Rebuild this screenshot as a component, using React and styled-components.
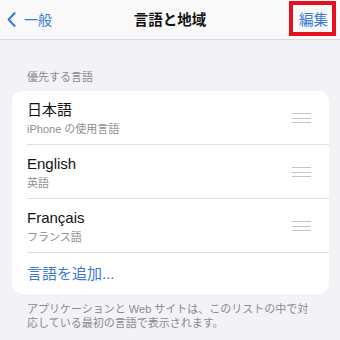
import React from 'react';
import styled, { createGlobalStyle } from 'styled-components';

const GlobalStyle = createGlobalStyle`
  body {
    margin: 0;
    background: #f2f2f7;
    font-family: "Liberation Sans", "Noto Sans CJK JP", sans-serif;
  }
`;

const Screen = styled.div`
  position: relative;
  width: 340px;
  height: 340px;
  overflow: hidden;
  background: #f2f2f7;
`;

const NavBar = styled.div`
  height: 39px;
  display: grid;
  grid-template-columns: 1fr auto 1fr;
  align-items: center;
  background: #f9f9fa;
  border-bottom: 1px solid #d9d9dd;
`;

const BackButton = styled.div`
  display: flex;
  align-items: center;
  gap: 8px;
  padding-left: 7px;
  color: #3a78d6;
  font-size: 14px;
  line-height: 20px;
`;

const Title = styled.div`
  font-size: 14.5px;
  font-weight: bold;
  color: #111;
  line-height: 20px;
`;

const EditButton = styled.div`
  justify-self: end;
  padding-right: 12px;
  color: #3a78d6;
  font-size: 14.5px;
  line-height: 20px;
`;

const Highlight = styled.div`
  position: absolute;
  left: 289px;
  top: 1px;
  width: 47px;
  height: 35px;
  box-sizing: border-box;
  border: 4px solid #e3121d;
`;

const SectionHeader = styled.div`
  padding: 30px 0 7px 27px;
  font-size: 11px;
  line-height: 14px;
  color: #8a8a8e;
`;

const Card = styled.div`
  margin: 0 11px 0 12px;
  background: #fff;
  border-radius: 10px;
  overflow: hidden;
`;

const Row = styled.div`
  margin-left: 15px;
  padding: 9px 18px 8px 0;
  display: flex;
  align-items: center;
  justify-content: space-between;
  border-bottom: 1px solid #dedee2;
`;

const RowText = styled.div`
  display: flex;
  flex-direction: column;
  gap: 2px;
`;

const Name = styled.div`
  font-size: 15px;
  line-height: 20px;
  color: #111;
`;

const Sub = styled.div`
  font-size: 11px;
  line-height: 14px;
  color: #8e8e93;
`;

const Handle = styled.div`
  width: 19px;
  display: flex;
  flex-direction: column;
  gap: 3.5px;

  span {
    display: block;
    height: 1px;
    background: #c4c4c8;
  }
`;

const AddRow = styled.div`
  padding: 11px 15px 10px;
  font-size: 15px;
  line-height: 20px;
  color: #3a78d6;
`;

const Footer = styled.div`
  padding: 8px 12px 0 27px;
  font-size: 11px;
  line-height: 14px;
  color: #8a8a8e;
`;

const languages = [
  { name: '日本語', sub: 'iPhone の使用言語' },
  { name: 'English', sub: '英語' },
  { name: 'Français', sub: 'フランス語' },
];

const App = () => {
  return (
    <Screen>
      <GlobalStyle />
      <NavBar>
        <BackButton>
          <svg width="9" height="15" viewBox="0 0 9 15">
            <path d="M7.5 1.2 L1.6 7.5 L7.5 13.8" fill="none" stroke="#3a78d6" strokeWidth="2.1" strokeLinecap="round" strokeLinejoin="round" />
          </svg>
          一般
        </BackButton>
        <Title>言語と地域</Title>
        <EditButton>編集</EditButton>
      </NavBar>
      <Highlight />

      <SectionHeader>優先する言語</SectionHeader>
      <Card>
        {languages.map((lang) => (
          <Row key={lang.name}>
            <RowText>
              <Name>{lang.name}</Name>
              <Sub>{lang.sub}</Sub>
            </RowText>
            <Handle>
              <span />
              <span />
              <span />
            </Handle>
          </Row>
        ))}
        <AddRow>言語を追加...</AddRow>
      </Card>
      <Footer>
        アプリケーションと Web サイトは、このリストの中で対
        <br />
        応している最初の言語で表示されます。
      </Footer>
    </Screen>
  );
};

export default App;
